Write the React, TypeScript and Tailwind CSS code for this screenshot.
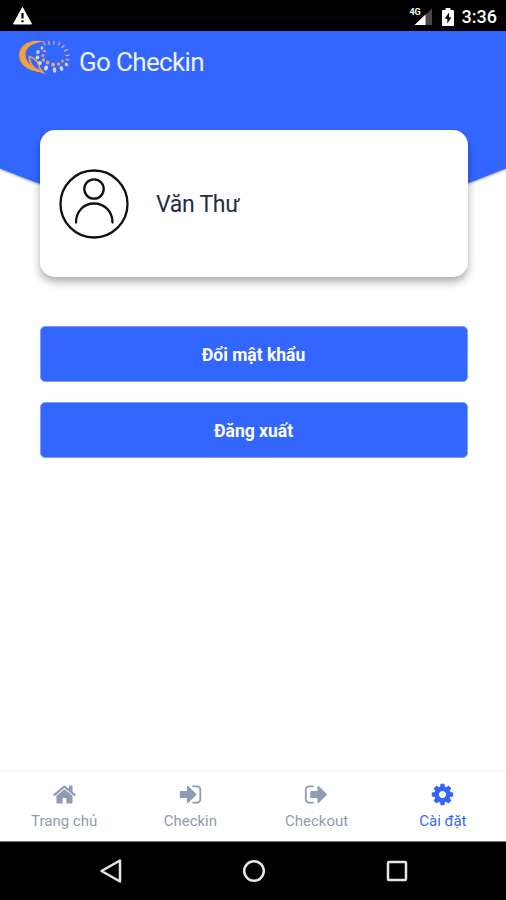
import { useState } from "react";

interface Tab {
  id: string;
  label: string;
  path: string;
}

const tabs: Tab[] = [
  {
    id: "home",
    label: "Trang chủ",
    path: "M1472 992v480q0 26-19 45t-45 19h-384v-384h-256v384h-384q-26 0-45-19t-19-45v-480q0-1 .5-3t.5-3l575-474 575 474q1 2 1 6zm223-69l-62 74q-8 9-21 11h-3q-13 0-21-7l-692-577-692 577q-12 8-24 7-13-2-21-11l-62-74q-8-10-7-23.5t11-21.5l719-599q32-26 76-26t76 26l244 204v-195q0-14 9-23t23-9h192q14 0 23 9t9 23v408l219 182q10 8 11 21.5t-7 23.5z",
  },
  {
    id: "checkin",
    label: "Checkin",
    path: "M1312 896q0 26-19 45l-544 544q-19 19-45 19t-45-19-19-45v-288h-448q-26 0-45-19t-19-45v-384q0-26 19-45t45-19h448v-288q0-26 19-45t45-19 45 19l544 544q19 19 19 45zm352-352v704q0 119-84.5 203.5t-203.5 84.5h-320q-13 0-22.5-9.5t-9.5-22.5q0-4-1-20t-.5-26.5 3-23.5 10-19.5 20.5-6.5h320q66 0 113-47t47-113v-704q0-66-47-113t-113-47h-312l-11.5-1-11.5-3-8-5.5-7-9-2-13.5q0-4-1-20t-.5-26.5 3-23.5 10-19.5 20.5-6.5h320q119 0 203.5 84.5t84.5 203.5z",
  },
  {
    id: "checkout",
    label: "Checkout",
    path: "M704 1440q0 4 1 20t.5 26.5-3 23.5-10 19.5-20.5 6.5h-320q-119 0-203.5-84.5t-84.5-203.5v-704q0-119 84.5-203.5t203.5-84.5h320q13 0 22.5 9.5t9.5 22.5q0 4 1 20t.5 26.5-3 23.5-10 19.5-20.5 6.5h-320q-66 0-113 47t-47 113v704q0 66 47 113t113 47h312l11.5 1 11.5 3 8 5.5 7 9 2 13.5zm928-544q0 26-19 45l-544 544q-19 19-45 19t-45-19-19-45v-288h-448q-26 0-45-19t-19-45v-384q0-26 19-45t45-19h448v-288q0-26 19-45t45-19 45 19l544 544q19 19 19 45z",
  },
  {
    id: "settings",
    label: "Cài đặt",
    path: "M1152 896q0-106-75-181t-181-75-181 75-75 181 75 181 181 75 181-75 75-181zm512-109v222q0 12-8 23t-20 13l-185 28q-19 54-39 91 35 50 107 138 10 12 10 25t-9 23q-27 37-99 108t-94 71q-12 0-26-9l-138-108q-44 23-91 38-16 136-29 186-7 28-36 28h-222q-14 0-24.5-8.5t-11.5-21.5l-28-184q-49-16-90-37l-141 107q-10 9-25 9-14 0-25-11-126-114-165-168-7-10-7-23 0-12 8-23 15-21 51-66.5t54-70.5q-27-50-41-99l-183-27q-13-2-21-12.5t-8-23.5v-222q0-12 8-23t19-13l186-28q14-46 39-92-40-57-107-138-10-12-10-24 0-10 9-23 26-36 98.5-107.5t94.5-71.5q13 0 26 10l138 107q44-23 91-38 16-136 29-186 7-28 36-28h222q14 0 24.5 8.5t11.5 21.5l28 184q49 16 90 37l142-107q9-9 24-9 13 0 25 10 129 119 165 170 7 8 7 22 0 12-8 23-15 21-51 66.5t-54 70.5q26 50 41 98l183 28q13 2 21 12.5t8 23.5z",
  },
];

function Logo() {
  return (
    <svg width="54" height="40" viewBox="0 0 54 40" aria-hidden="true">
      <path
        d="M27 3.500C11 0 1.200 8 1.200 17C1.200 27.500 11 33.500 25 34.500C15 30 7.500 25 7.500 16.500C7.500 9 15 4.500 27 3.500Z"
        fill="#f7a238"
      />
      <path
        d="M11.500 18.500C17 20 21.500 25 21.500 30L25 34.500C16.500 31.500 11 26 11.500 18.500Z"
        fill="none"
        stroke="#ee9a50"
        strokeWidth="1.800"
      />
      <g fill="none" stroke="#c9a0a4" strokeWidth="1.500" strokeLinecap="round">
        <path d="M25.500 4L27 7M30.500 3.500L31.500 6.500M36 3.500V6M41.500 4.500L40.500 7M46 7.500L44 9.500M49.500 11.500L46.500 13M51 17L48 17.500M51 22L48 21.500" />
      </g>
      <g fill="#d5d6e2">
        <ellipse cx="24" cy="10" rx="1.400" ry="1.700" />
        <ellipse cx="20" cy="14" rx="1.700" ry="1.900" />
        <ellipse cx="19.500" cy="19.500" rx="1.800" ry="2" />
        <ellipse cx="22" cy="25" rx="1.900" ry="2.100" />
        <ellipse cx="28" cy="30" rx="2" ry="2.500" transform="rotate(18 28 30)" />
        <ellipse cx="36.500" cy="32" rx="1.800" ry="2.700" />
        <ellipse cx="43.500" cy="30.500" rx="1.700" ry="2.500" transform="rotate(-22 43.500 30.500)" />
        <ellipse cx="48.500" cy="26.500" rx="1.500" ry="2" transform="rotate(-40 48.500 26.500)" />
      </g>
      <g fill="#eea36c">
        <ellipse cx="26.500" cy="13" rx="1.200" ry="1.300" />
        <ellipse cx="25" cy="17.500" rx="1.400" ry="1.500" />
        <ellipse cx="25.500" cy="22" rx="1.600" ry="1.700" />
        <ellipse cx="29.500" cy="24.500" rx="1.800" ry="2" />
        <ellipse cx="35" cy="26.500" rx="1.800" ry="2" />
        <ellipse cx="40.500" cy="26" rx="1.600" ry="1.800" />
        <ellipse cx="44.500" cy="23" rx="1.300" ry="1.500" />
      </g>
    </svg>
  );
}

function StatusBar() {
  return (
    <div className="flex h-[31px] shrink-0 items-center bg-black pr-[9px] pl-3 text-white">
      <svg width="21" height="20" viewBox="0 0 21 20">
        <path
          d="M10.500 1.500L19.500 18H1.500Z"
          fill="#fff"
          stroke="#fff"
          strokeLinejoin="round"
        />
        <path d="M10.500 7V12.500M10.500 14.300V16.300" stroke="#000" strokeWidth="2.200" />
      </svg>
      <div className="ml-auto flex items-center pt-0.5">
        <div className="relative h-[18px] w-[23px]">
          <svg width="23" height="18" viewBox="0 0 23 18">
            <path d="M22 0.500V17H5Z" fill="#484848" />
            <path d="M15.500 6.500V17H4.500Z" fill="#fff" />
          </svg>
          <span className="absolute top-0 left-0 text-[9px] leading-[9px] font-bold tracking-tight">
            4G
          </span>
        </div>
        <svg className="ml-2" width="14" height="20" viewBox="0 0 14 20">
          <path
            d="M4.500 1H9.500V3H12Q13 3 13 4V18Q13 19 12 19H2Q1 19 1 18V4Q1 3 2 3H4.500Z"
            fill="#fff"
          />
          <path d="M8 5.500L3.700 11.700H6.300V16.500L10.500 10.200H8Z" fill="#000" />
        </svg>
        <span className="ml-[7px] text-[18px] leading-none font-medium">3:36</span>
      </div>
    </div>
  );
}

function Avatar() {
  return (
    <svg
      width="70"
      height="70"
      viewBox="0 0 70 70"
      fill="none"
      stroke="#111"
      strokeWidth="2.300"
      strokeLinecap="round"
    >
      <circle cx="35" cy="35" r="33.500" />
      <circle cx="35" cy="20" r="9.700" />
      <path d="M17 53.500C17 42 25 34.500 35 34.500S53.500 42 53.500 53.500" />
    </svg>
  );
}

function ActionButton({ label }: { label: string }) {
  return (
    <button className="h-14 w-full rounded-[5px] border border-[#7f9fff] bg-[#3366ff] pt-0.5 text-[17.500px] font-bold text-white">
      {label}
    </button>
  );
}

export default function App() {
  const [activeTab, setActiveTab] = useState<string>("settings");

  return (
    <div className="flex h-[900px] w-[506px] flex-col overflow-hidden bg-white font-['Roboto',sans-serif]">
      <StatusBar />
      <main className="relative flex-1">
        <svg
          className="absolute top-0 left-0 drop-shadow-[0_1px_1px_rgba(0,0,0,0.35)]"
          width="506"
          height="200"
          viewBox="0 0 506 200"
        >
          <path d="M0 0H506V137.500Q253 243 0 137.500Z" fill="#3366ff" />
        </svg>
        <div className="relative">
          <header className="flex h-[99px] items-start pt-[7px] pl-[18px]">
            <Logo />
            <h1 className="mt-[9px] ml-[7px] text-[26px] leading-[30px] tracking-[-0.65px] text-[#edf1ff]">
              Go Checkin
            </h1>
          </header>
          <section className="mr-[38.500px] ml-[39.500px] flex h-[147px] items-center rounded-[15px] bg-white pl-[19.500px] shadow-[0_5px_9px_rgba(0,0,0,0.32)]">
            <Avatar />
            <p className="mt-[3px] ml-[27px] text-[23px] leading-7 tracking-[-0.3px] text-[#222b45]">
              Văn Thư
            </p>
          </section>
          <div className="mr-[38.500px] ml-[39.500px] mt-[49px] flex flex-col gap-5">
            <ActionButton label="Đổi mật khẩu" />
            <ActionButton label="Đăng xuất" />
          </div>
        </div>
      </main>
      <nav className="grid h-[71px] shrink-0 grid-cols-4 border-t border-[#edf0f5] bg-white pl-px">
        {tabs.map((tab) => (
          <button
            key={tab.id}
            onClick={() => setActiveTab(tab.id)}
            className={`flex flex-col items-center pt-[11px] text-[15px] leading-5 ${
              activeTab === tab.id ? "text-[#3366ff]" : "text-[#8f9bb3]"
            }`}
          >
            <svg width="25" height="25" viewBox="0 0 1792 1792" fill="currentColor">
              <path d={tab.path} />
            </svg>
            <span className="mt-1">{tab.label}</span>
          </button>
        ))}
      </nav>
      <div className="flex h-[59px] shrink-0 items-center justify-center gap-[115px] border-t border-[#777] bg-black pl-px">
        <svg width="28" height="28" viewBox="0 0 28 28" fill="none" stroke="#e6e6e6" strokeWidth="2.500">
          <path d="M23 3.500V24.500L4.500 14Z" strokeLinejoin="round" />
        </svg>
        <svg width="28" height="28" viewBox="0 0 28 28" fill="none" stroke="#e6e6e6" strokeWidth="2.500">
          <circle cx="14" cy="14" r="9.800" />
        </svg>
        <svg width="28" height="28" viewBox="0 0 28 28" fill="none" stroke="#e6e6e6" strokeWidth="2.500">
          <rect x="5" y="5" width="18" height="18" rx="1" />
        </svg>
      </div>
    </div>
  );
}
